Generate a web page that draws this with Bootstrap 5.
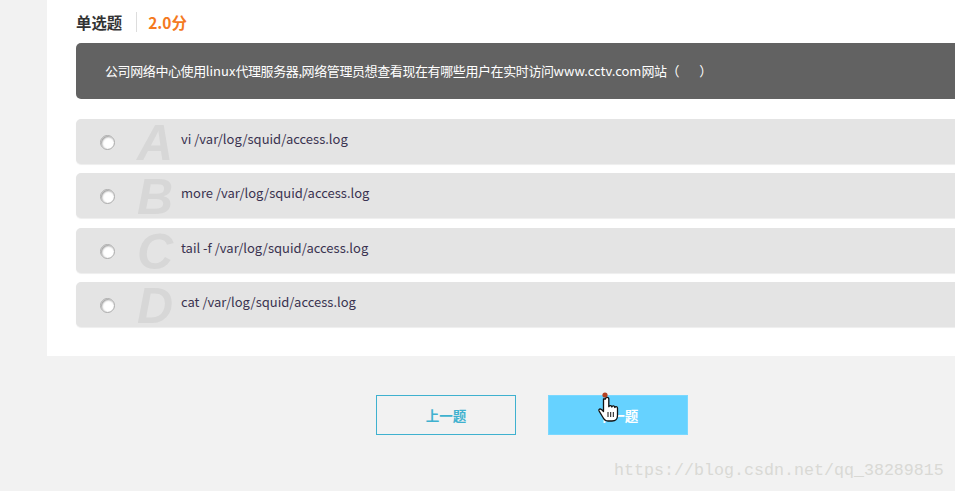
<!DOCTYPE html>
<html lang="zh-CN">
<head>
<meta charset="utf-8">
<title>单选题</title>
<link href="https://cdn.jsdelivr.net/npm/bootstrap@5.3.0/dist/css/bootstrap.min.css" rel="stylesheet">
<style>
html,body{height:491px;overflow:hidden}
body{background:#f2f2f2;font-family:"Noto Sans CJK SC","Noto Sans",sans-serif;color:#333;position:relative}
.sheet{background:#fff;margin-left:47px;margin-right:-20px;height:356px;padding:12px 0 0 29px}
.qhead{height:20px;margin-bottom:11px;line-height:20px}
.qtype{font-size:15.400px;font-weight:700;color:#333;padding-right:14px;border-right:1px solid #ddd}
.qscore{font-size:15.500px;font-weight:700;color:#f47a1f;padding-left:11px}
.stem{background:#626262;color:#fff;height:56px;border-radius:5px;padding-left:29px;font-size:13px;line-height:56px;margin-bottom:20px;letter-spacing:-.4px}
.stem-latin{letter-spacing:0}
.optlist{display:flex;flex-direction:column;gap:9px}
.opt{height:45px;background:#e4e4e4;border-radius:5px;position:relative;padding-left:105px;font-size:13px;line-height:39px;color:#3a3350;box-shadow:0 1px 1px #eee}
.opt:nth-child(3){margin-top:1px}
.opt:nth-child(3)~.opt{margin-top:0}
.opt-radio{position:absolute;left:24px;top:16px;width:15px;height:15px;border-radius:50%;background:#fff;border:1px solid #aaa;box-shadow:inset 1px 1px 2px #999}
.opt-letter{position:absolute;left:61px;top:-1px;font-family:"Liberation Sans",sans-serif;font-weight:700;font-style:italic;font-size:50px;line-height:50px;color:#d7d7d7}
.navbtns{display:flex;gap:32px;padding-left:376px;margin-top:39px}
.qbtn{width:140px;height:40px;font-size:13.500px;font-weight:700;line-height:38px;text-align:center;border:1px solid #3fb1cf;border-radius:0;padding:0;color:#3fb1cf;background:transparent}
.qbtn-on{background:#66d2ff;border-color:#7ad8ff;color:#fff}
.hand{position:absolute;left:598px;top:392px;width:22px;height:32px}
.mark-url{position:absolute;left:614px;top:460px;font-family:"Liberation Mono",monospace;font-size:16.67px;line-height:22px;color:#d9d9d5;white-space:nowrap}
</style>
</head>
<body>
<div class="sheet">
  <div class="qhead d-flex align-items-center"><span class="qtype">单选题</span><span class="qscore">2.0分</span></div>
  <div class="stem">公司网络中心使用<span class="stem-latin">linux</span>代理服务器,网络管理员想查看现在有哪些用户在实时访问<span class="stem-latin">www.cctv.com</span>网站（&nbsp;&nbsp;&nbsp;&nbsp;&nbsp;&nbsp;&nbsp;&nbsp;）</div>
  <div class="optlist">
    <div class="opt"><span class="opt-radio"></span><span class="opt-letter">A</span>vi /var/log/squid/access.log</div>
    <div class="opt"><span class="opt-radio"></span><span class="opt-letter">B</span>more /var/log/squid/access.log</div>
    <div class="opt"><span class="opt-radio"></span><span class="opt-letter">C</span>tail -f /var/log/squid/access.log</div>
    <div class="opt"><span class="opt-radio"></span><span class="opt-letter">D</span>cat /var/log/squid/access.log</div>
  </div>
</div>
<div class="navbtns">
  <button type="button" class="btn qbtn">上一题</button>
  <button type="button" class="btn qbtn qbtn-on">下一题</button>
</div>
<svg class="hand" viewBox="0 0 22 32" aria-hidden="true">
  <path d="M5.500 7v12.500L3.500 17.500c-1.500-1-3-.3-2.500 1.300L5 25.500c1 2 2.500 3.500 5 3.500h4c3.500 0 5.500-2.300 5.500-5.500v-7.500c0-1.700-2.300-1.900-2.700-.5 0-1.800-2.500-2.100-3-.5 0-1.800-2.500-2-3-.3V7c0-2.300-3.300-2.300-3.300 0z" fill="#fff" stroke="#111" stroke-width="1.300" stroke-linejoin="round"/>
  <path d="M10 20v5M12.700 20v5M15.300 20v5" stroke="#111" stroke-width="1"/>
  <circle cx="7" cy="3" r="2.600" fill="#b5401f"/>
</svg>
<div class="mark-url">https://blog.csdn.net/qq_38289815</div>
</body>
</html>
